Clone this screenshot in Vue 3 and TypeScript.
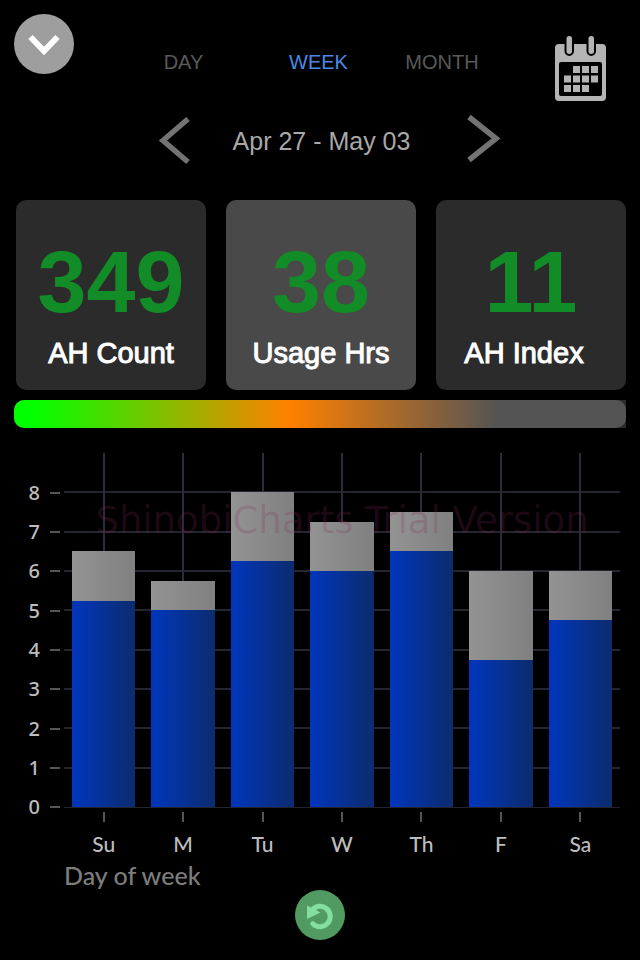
<script setup lang="ts">
import { ref } from 'vue'

type Period = 'DAY' | 'WEEK' | 'MONTH'

interface Metric {
  id: string
  value: number
  label: string
}

interface DayUsage {
  day: string
  used: number
  total: number
}

const periods: Period[] = ['DAY', 'WEEK', 'MONTH']
const period = ref<Period>('WEEK')

const metrics: Metric[] = [
  { id: 'count', value: 349, label: 'AH Count' },
  { id: 'hours', value: 38, label: 'Usage Hrs' },
  { id: 'index', value: 11, label: 'AH Index' },
]
const selected = ref('hours')

const axisMax = 9
const axisLabels = [8, 7, 6, 5, 4, 3, 2, 1, 0]

const week: DayUsage[] = [
  { day: 'Su', used: 5.25, total: 6.5 },
  { day: 'M', used: 5, total: 5.75 },
  { day: 'Tu', used: 6.25, total: 8 },
  { day: 'W', used: 6, total: 7.25 },
  { day: 'Th', used: 6.5, total: 7.5 },
  { day: 'F', used: 3.75, total: 6 },
  { day: 'Sa', used: 4.75, total: 6 },
]

const share = (value: number, whole: number): string => `${(value / whole) * 100}%`
</script>

<template>
  <main class="screen">
    <header class="top">
      <button class="collapse" type="button" aria-label="Close">
        <svg viewBox="0 0 60 60" width="60" height="60" aria-hidden="true">
          <path d="M16.500 23.500 L30 37.500 L43.500 23.500" transform="translate(0 -0.500)" fill="none" stroke="#fff" stroke-width="6" />
        </svg>
      </button>
      <nav class="tabs">
        <button
          v-for="p in periods"
          :key="p"
          type="button"
          class="tab"
          :class="{ active: p === period }"
          @click="period = p"
        >{{ p }}</button>
      </nav>
      <button class="calendar" type="button" aria-label="Calendar">
        <svg viewBox="0 0 52 65" width="52" height="65" aria-hidden="true">
          <rect x="0" y="8" width="51" height="57" rx="4" fill="#b4b4b4" />
          <rect x="4" y="26" width="43" height="34" rx="2" fill="#000" />
          <g fill="#b4b4b4" stroke="#000" stroke-width="2">
            <rect x="10.500" y="-1" width="7.500" height="20" rx="3.700" />
            <rect x="32.500" y="-1" width="7.500" height="20" rx="3.700" />
          </g>
          <g fill="#b4b4b4">
            <path d="M18 30h7v7h-7zM27 30h7v7h-7zM36 30h7v7h-7z" />
            <path d="M9 39.500h7v7h-7zM18 39.500h7v7h-7zM27 39.500h7v7h-7zM36 39.500h7v7h-7z" />
            <path d="M9 49h7v7h-7zM18 49h7v7h-7zM27 49h7v7h-7z" />
          </g>
        </svg>
      </button>
    </header>

    <section class="range">
      <button class="arrow" type="button" aria-label="Previous week">
        <svg viewBox="0 0 32 48" width="32" height="48" aria-hidden="true">
          <path d="M29 4 L4 25.500 L29 47" fill="none" stroke="#737373" stroke-width="5.500" />
        </svg>
      </button>
      <span class="dates">Apr 27 - May 03</span>
      <button class="arrow" type="button" aria-label="Next week">
        <svg viewBox="0 0 32 48" width="32" height="48" aria-hidden="true">
          <path d="M2 2 L29 23.500 L2 45" fill="none" stroke="#737373" stroke-width="5.500" />
        </svg>
      </button>
    </section>

    <section class="cards">
      <button
        v-for="m in metrics"
        :key="m.id"
        type="button"
        class="card"
        :class="[m.id, { selected: m.id === selected }]"
        @click="selected = m.id"
      >
        <span class="value">{{ m.value }}</span>
        <span class="label">{{ m.label }}</span>
      </button>
    </section>

    <div class="meter"><div class="scale"></div></div>

    <section class="chart">
      <div class="y-axis">
        <div v-for="n in axisLabels" :key="n" class="y-label">{{ n }}</div>
      </div>
      <div class="plot">
        <div class="rows"><i v-for="n in axisMax" :key="n"></i></div>
        <div class="columns"><i v-for="d in week" :key="d.day"></i></div>
        <div class="bars">
          <div v-for="d in week" :key="d.day" class="slot">
            <div class="bar" :style="{ height: share(d.total, axisMax) }">
              <div class="used" :style="{ height: share(d.used, d.total) }"></div>
            </div>
          </div>
        </div>
        <div class="watermark">ShinobiCharts Trial Version</div>
      </div>
      <div class="x-axis">
        <div v-for="d in week" :key="d.day" class="x-label">{{ d.day }}</div>
      </div>
      <div class="x-title">Day of week</div>
    </section>

    <button class="refresh" type="button" aria-label="Refresh">
      <svg viewBox="0 0 50 50" width="50" height="50" aria-hidden="true">
        <path d="M17 20.200 A10.200 10.200 0 1 1 17.800 33.700" fill="none" stroke="#84dea0" stroke-width="5" stroke-linecap="round" />
        <path d="M12 15.500 L12 29 L25.500 22.500 Z" fill="#84dea0" />
      </svg>
    </button>
  </main>
</template>

<style>
body {
  background: #000;
}
</style>

<style scoped>
.screen {
  display: flex;
  flex-direction: column;
  min-height: 100vh;
  box-sizing: border-box;
  padding-bottom: 20px;
  background: #000;
  font-family: "Liberation Sans", Arial, sans-serif;
}

button {
  display: block;
  padding: 0;
  border: 0;
  background: none;
  font-family: inherit;
  cursor: pointer;
}

svg {
  display: block;
  overflow: visible;
}

.top {
  display: grid;
  grid-template-columns: 60px 1fr 52px;
  align-items: start;
  padding: 14px 33px 0 14px;
}

.collapse {
  border-radius: 50%;
  background: #9e9e9e;
}

.tabs {
  display: grid;
  grid-template-columns: 135fr 135fr 112fr;
  padding: 36px 57px 0 42px;
}

.tab {
  color: #595959;
  font-size: 20px;
  line-height: 24px;
}

.tab.active {
  color: #4a8ae6;
}

.calendar {
  margin-top: 22px;
}

.range {
  display: grid;
  grid-template-columns: 32px 276px 32px;
  justify-content: center;
  align-items: center;
  margin-top: 14px;
  padding-left: 17px;
}

.dates {
  padding: 4px 14px 0 0;
  color: #a8a8a8;
  font-size: 25px;
  line-height: 30px;
  text-align: center;
  white-space: nowrap;
}

.cards {
  display: grid;
  grid-template-columns: repeat(3, 1fr);
  gap: 20px;
  margin-top: 37px;
  padding: 0 14px 0 16px;
}

.card {
  display: flex;
  flex-direction: column;
  align-items: center;
  padding: 30px 0 18px;
  border-radius: 10px;
  background: #2b2b2b;
}

.card.selected {
  background: #494949;
}

.value {
  color: #128c26;
  font-size: 88px;
  font-weight: 700;
  line-height: 104px;
}

.label {
  color: #fff;
  font-size: 29px;
  line-height: 38px;
  -webkit-text-stroke: 1px #fff;
}

.index .label {
  padding-right: 14px;
}

.meter {
  margin: 10px 14px 0;
  border-radius: 10px 0 0 10px;
  background: #2b2b2b;
}

.scale {
  height: 28px;
  border-radius: 10px;
  background: linear-gradient(90deg, #0f0 3%, #ff8000 45%, #545454 79%);
}

.chart {
  display: grid;
  grid-template-columns: 64px 1fr;
  margin-top: 25px;
  padding-right: 20px;
  font-family: Lato, "Noto Sans", sans-serif;
  font-weight: 500;
}

.y-axis {
  display: grid;
  grid-template-rows: repeat(9, 1fr);
  height: 354px;
  margin: 20px 0 -20px;
}

.y-label {
  display: flex;
  align-items: center;
  justify-content: flex-end;
  gap: 10px;
  padding-right: 4px;
  color: #bdbdbd;
  font-family: "Noto Sans", sans-serif;
  font-size: 20px;
  line-height: 24px;
}

.y-label::after {
  content: "";
  width: 10px;
  height: 2px;
  background: #555;
}

.plot {
  display: grid;
  height: 354px;
  border-bottom: 1px solid #23252e;
}

.plot > * {
  grid-area: 1 / 1;
  min-width: 0;
}

.rows {
  display: grid;
  grid-template-rows: repeat(9, 1fr);
  margin: 1px 0 -1px;
}

.rows i {
  border-bottom: 2px solid #23262e;
}

.rows i:last-child {
  border-bottom: 0;
}

.columns,
.bars,
.x-axis {
  display: grid;
  grid-template-columns: repeat(7, 1fr);
}

.columns i {
  justify-self: center;
  width: 2px;
  background: #2a2c37;
}

.slot {
  display: flex;
  align-items: flex-end;
  justify-content: center;
}

.bar {
  display: flex;
  align-items: flex-end;
  width: 80%;
  background: linear-gradient(90deg, #939393, #808080);
}

.used {
  width: 100%;
  background: linear-gradient(90deg, #0036bd, #0c2c6e);
}

.watermark {
  padding-top: 46px;
  color: rgba(130, 45, 90, 0.22);
  font-family: "DejaVu Sans", sans-serif;
  font-size: 37px;
  line-height: 44px;
  text-align: center;
  white-space: nowrap;
}

.x-axis {
  grid-column: 2;
  margin-top: 4px;
}

.x-label {
  display: flex;
  flex-direction: column;
  align-items: center;
  gap: 10px;
  color: #bdbdbd;
  font-size: 21px;
  line-height: 24px;
}

.x-label::before {
  content: "";
  width: 2px;
  height: 10px;
  background: #555;
}

.x-title {
  grid-column: 2;
  margin-top: 5px;
  color: #7d7d7d;
  font-size: 25px;
  line-height: 28px;
}

.refresh {
  align-self: center;
  margin-top: 1px;
  border-radius: 50%;
  background: #519b62;
}
</style>
